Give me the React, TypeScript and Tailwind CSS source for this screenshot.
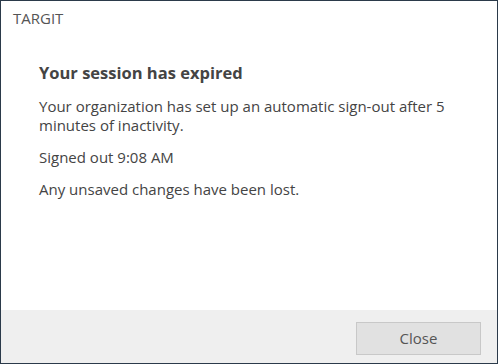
export default function App() {
  return (
    <div className="w-[498px] h-[364px] border border-[#2b3a4a] bg-white flex flex-col font-['Open_Sans',sans-serif] text-[#444]">
      <div className="pt-[7px] pl-[12px] text-[15px] leading-[20px] text-[#555]">TARGIT</div>
      <div className="flex-1 pl-[38px] pr-[18px] pt-[34px] text-[15px] leading-[19px]">
        <h1 className="text-[16.5px] font-bold leading-[22px] text-[#444]">Your session has expired</h1>
        <p className="mt-[13px]">
          Your organization has set up an automatic sign-out after 5 minutes of inactivity.
        </p>
        <p className="mt-[13px]">Signed out 9:08 AM</p>
        <p className="mt-[13px]">Any unsaved changes have been lost.</p>
      </div>
      <div className="h-[53px] bg-[#efefef] flex items-start justify-end pt-[12px] pr-[16px]">
        <button className="w-[125px] h-[33px] bg-[#e1e1e1] border border-[#c8c8c8] text-[15px] text-[#555]">Close</button>
      </div>
    </div>
  );
}
